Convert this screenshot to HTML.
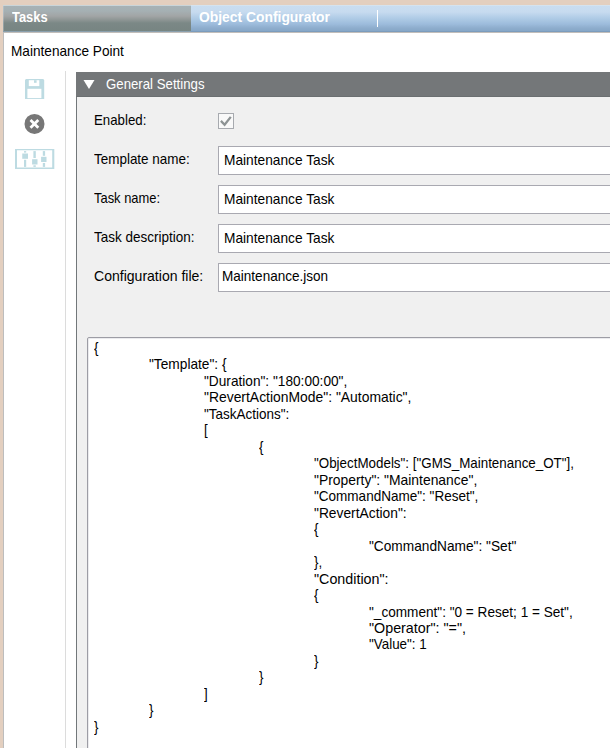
<!DOCTYPE html>
<html><head><meta charset="utf-8">
<style>
html,body{margin:0;padding:0;width:610px;height:748px;overflow:hidden;background:#e3cfbf;font-family:"Liberation Sans",sans-serif;}
.abs{position:absolute;}
#win{position:absolute;left:3px;top:5px;width:607px;height:743px;background:#fff;overflow:hidden;}
#tabs{position:absolute;left:0;top:0;width:607px;height:26px;}
#tab1{position:absolute;left:0;top:0;width:188px;height:26px;background:linear-gradient(#c9d5d9 0px,#c9d5d9 1px,#a6b2b6 1px,#a5b0b3 6px,#a2a5a6 11px,#8d9594 15px,#7b8886 18px,#778582 26px);}
#tab2{position:absolute;left:188px;top:0;width:419px;height:26px;background:linear-gradient(#d5e3ef 0px,#d5e3ef 1px,#c9ddf1 1px,#c7dbef 7px,#b0cce6 13px,#9dbcdc 19px,#8eadcd 23px,#86a7c7 26px);}
#tabline{position:absolute;left:0;top:26px;width:607px;height:1px;background:linear-gradient(to right,#8aa0ae 187px,#7b9cbd 188px);}#tabline2{position:absolute;left:0;top:27px;width:607px;height:1px;background:#c2beba;}
.tabtxt{position:absolute;top:-1px;color:#fff;font-weight:bold;font-size:14px;line-height:26px;white-space:nowrap;}
#div1{position:absolute;left:186px;top:5px;width:1px;height:17px;background:#fff;}
#title{position:absolute;left:8px;top:38px;font-size:14.3px;transform-origin:0 0;transform:scaleX(0.953);color:#000;white-space:nowrap;line-height:16px;}
#sep{position:absolute;left:62px;top:66px;width:1px;height:700px;background:#dcdcdc;}
#panel{position:absolute;left:73px;top:67px;width:600px;height:700px;background:#f0f0f0;}
#phead{position:absolute;left:0;top:0;width:600px;height:24px;background:#747779;border-bottom:1px solid #6b6f71;}
#pborder{position:absolute;left:0;top:25px;width:1px;height:700px;background:#72777a;}
.lbl{position:absolute;left:18px;font-size:14.3px;color:#000;white-space:nowrap;line-height:16px;}
.inp{position:absolute;left:142px;width:600px;height:27px;background:#fff;border:1px solid #a9a9b1;}
.inptxt{position:absolute;font-size:14.3px;transform-origin:0 0;transform:scaleX(0.947);color:#000;white-space:nowrap;line-height:16px;}
#json{position:absolute;left:11px;top:265px;width:600px;height:500px;background:#fff;border:1px solid #9d9da5;border-radius:2px;box-shadow:inset 1px 1px 0 #ebebee;}
#jtxt{position:absolute;left:6px;top:1.75px;font-size:14.3px;line-height:16.48px;color:#000;white-space:nowrap;}
</style></head><body>
<div id="win">
  <div id="tabs">
    <div id="tab1"><span class="tabtxt" style="left:9px;transform-origin:0 0;transform:scaleX(0.92)">Tasks</span></div>
    <div id="tab2"><span class="tabtxt" style="left:8px;transform-origin:0 0;transform:scaleX(0.99)">Object Configurator</span><div id="div1"></div></div>
  </div>
  <div id="tabline"></div><div id="tabline2"></div><div id="lborder" style="position:absolute;left:0;top:27px;width:1px;height:720px;background:#bdbdbd"></div><div style="position:absolute;left:0;top:0;width:1px;height:26px;background:rgba(200,215,225,0.35)"></div>
  <div id="title">Maintenance Point</div>
  <div id="sep"></div>
  <!-- icons -->
  <svg class="abs" style="left:0;top:0" width="70" height="180" viewBox="3 5 70 180">
    <g fill="#bddbe2">
      <path d="M26 79 H43.2 L44.2 80 V99 H25 V80 Z"/>
    </g>
    <rect x="28.8" y="80.2" width="10.5" height="5.9" fill="#fff"/>
    <rect x="34" y="80.2" width="2.6" height="2.6" fill="#bddbe2"/>
    <rect x="27.4" y="88.8" width="14" height="9.3" fill="#fff"/>
    <circle cx="34.5" cy="123.9" r="10" fill="#777"/>
    <path d="M30.5 120 L38.3 127.8 M38.3 120 L30.5 127.8" stroke="#fff" stroke-width="2.8"/>
    <path fill-rule="evenodd" fill="#bddbe2" d="M15 149 H54.3 V169 H15 Z M17 150.3 V167.6 H52.2 V150.3 Z"/>
    <g fill="#bddbe2">
      <rect x="24" y="151.1" width="2.2" height="1.5"/>
      <rect x="22.25" y="153.5" width="5.75" height="5.3"/>
      <rect x="24" y="159.8" width="2.2" height="7.1"/>
      <rect x="33.4" y="151.1" width="2.4" height="6.9"/>
      <rect x="32.1" y="159.2" width="5.4" height="5.3"/>
      <rect x="33.4" y="165.3" width="2.4" height="1.6"/>
      <rect x="42.8" y="151.1" width="2.3" height="4.7"/>
      <rect x="41.1" y="156.8" width="5.4" height="5.2"/>
      <rect x="42.8" y="163" width="2.3" height="3.9"/>
    </g>
  </svg>
  <div id="panel">
    <div id="phead">
      <svg class="abs" style="left:0;top:0" width="40" height="24" viewBox="76 72 40 24"><path d="M83.5 80 H94.5 L89 89 Z" fill="#fff"/></svg>
      <span class="abs" style="left:30px;top:4.1px;font-size:14.3px;transform-origin:0 0;transform:scaleX(0.925);color:#fff;white-space:nowrap;line-height:16px">General Settings</span>
    </div>
    <div id="pborder"></div>
    <div class="lbl" style="top:39.8px;transform-origin:0 0;transform:scaleX(0.927)">Enabled:</div>
    <div class="abs" style="left:142px;top:41px;width:14px;height:14px;border:1px solid #a7aaaf;background:#f9f9f9"></div>
    <svg class="abs" style="left:142px;top:41px" width="16" height="16" viewBox="218 113 16 16"><path d="M220.9 120.9 L224.6 124.7 L230.8 116.9" fill="none" stroke="#8d9394" stroke-width="2.3"/></svg>
    <div class="lbl" style="top:78.7px;transform-origin:0 0;transform:scaleX(0.941)">Template name:</div>
    <div class="lbl" style="top:118.3px;transform-origin:0 0;transform:scaleX(0.903)">Task name:</div>
    <div class="lbl" style="top:157.1px;transform-origin:0 0;transform:scaleX(0.943)">Task description:</div>
    <div class="lbl" style="top:196.3px;transform-origin:0 0;transform:scaleX(0.982)">Configuration file:</div>
    <div class="inp" style="top:74px"><span class="inptxt" style="left:5px;top:4.5px;transform:scaleX(0.96)">Maintenance Task</span></div>
    <div class="inp" style="top:113px"><span class="inptxt" style="left:5px;top:4.5px;transform:scaleX(0.96)">Maintenance Task</span></div>
    <div class="inp" style="top:152px"><span class="inptxt" style="left:5px;top:4.5px;transform:scaleX(0.96)">Maintenance Task</span></div>
    <div class="inp" style="top:191px"><span class="inptxt" style="left:3px;top:3.5px">Maintenance.json</span></div>
    <div id="json"><div id="jtxt"><div style="padding-left:0px"><span style="display:inline-block;transform-origin:0 0;transform:scaleX(0.931)">{</span></div><div style="padding-left:55px"><span style="display:inline-block;transform-origin:0 0;transform:scaleX(0.959)">"Template": {</span></div><div style="padding-left:110px"><span style="display:inline-block;transform-origin:0 0;transform:scaleX(0.956)">"Duration": "180:00:00",</span></div><div style="padding-left:110px"><span style="display:inline-block;transform-origin:0 0;transform:scaleX(0.972)">"RevertActionMode": "Automatic",</span></div><div style="padding-left:110px"><span style="display:inline-block;transform-origin:0 0;transform:scaleX(0.942)">"TaskActions":</span></div><div style="padding-left:110px"><span style="display:inline-block;transform-origin:0 0;transform:scaleX(0.931)">[</span></div><div style="padding-left:165px"><span style="display:inline-block;transform-origin:0 0;transform:scaleX(0.931)">{</span></div><div style="padding-left:220px"><span style="display:inline-block;transform-origin:0 0;transform:scaleX(0.936)">"ObjectModels": ["GMS_Maintenance_OT"],</span></div><div style="padding-left:220px"><span style="display:inline-block;transform-origin:0 0;transform:scaleX(0.971)">"Property": "Maintenance",</span></div><div style="padding-left:220px"><span style="display:inline-block;transform-origin:0 0;transform:scaleX(0.946)">"CommandName": "Reset",</span></div><div style="padding-left:220px"><span style="display:inline-block;transform-origin:0 0;transform:scaleX(0.965)">"RevertAction":</span></div><div style="padding-left:220px"><span style="display:inline-block;transform-origin:0 0;transform:scaleX(0.931)">{</span></div><div style="padding-left:275px"><span style="display:inline-block;transform-origin:0 0;transform:scaleX(0.958)">"CommandName": "Set"</span></div><div style="padding-left:220px"><span style="display:inline-block;transform-origin:0 0;transform:scaleX(0.931)">},</span></div><div style="padding-left:220px"><span style="display:inline-block;transform-origin:0 0;transform:scaleX(1.0)">"Condition":</span></div><div style="padding-left:220px"><span style="display:inline-block;transform-origin:0 0;transform:scaleX(0.931)">{</span></div><div style="padding-left:275px"><span style="display:inline-block;transform-origin:0 0;transform:scaleX(0.951)">"_comment": "0 = Reset; 1 = Set",</span></div><div style="padding-left:275px"><span style="display:inline-block;transform-origin:0 0;transform:scaleX(1.0)">"Operator": "=",</span></div><div style="padding-left:275px"><span style="display:inline-block;transform-origin:0 0;transform:scaleX(0.938)">"Value": 1</span></div><div style="padding-left:220px"><span style="display:inline-block;transform-origin:0 0;transform:scaleX(0.931)">}</span></div><div style="padding-left:165px"><span style="display:inline-block;transform-origin:0 0;transform:scaleX(0.931)">}</span></div><div style="padding-left:110px"><span style="display:inline-block;transform-origin:0 0;transform:scaleX(0.931)">]</span></div><div style="padding-left:55px"><span style="display:inline-block;transform-origin:0 0;transform:scaleX(0.931)">}</span></div><div style="padding-left:0px"><span style="display:inline-block;transform-origin:0 0;transform:scaleX(0.931)">}</span></div></div></div>
  </div>
</div>
</body></html>
